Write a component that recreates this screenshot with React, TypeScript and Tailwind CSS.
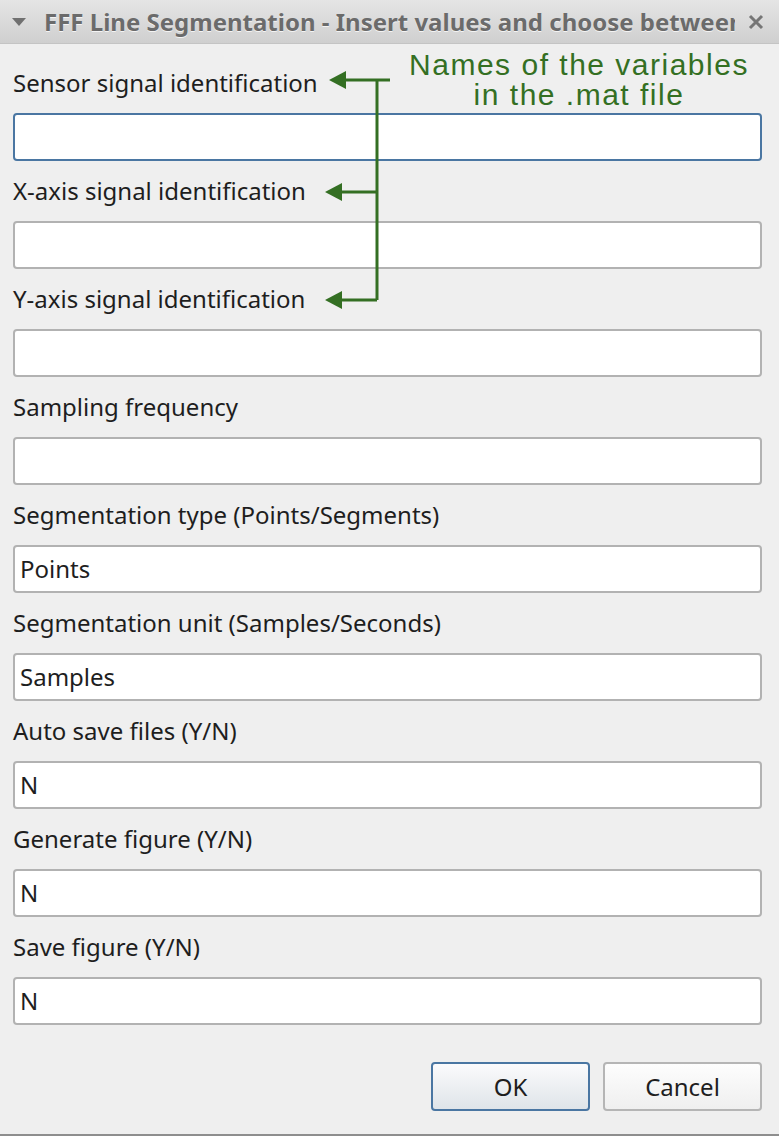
import React from "react";

const fields: { label: string; value: string; focused?: boolean }[] = [
  { label: "Sensor signal identification", value: "", focused: true },
  { label: "X-axis signal identification", value: "" },
  { label: "Y-axis signal identification", value: "" },
  { label: "Sampling frequency", value: "" },
  { label: "Segmentation type (Points/Segments)", value: "Points" },
  { label: "Segmentation unit (Samples/Seconds)", value: "Samples" },
  { label: "Auto save files (Y/N)", value: "N" },
  { label: "Generate figure (Y/N)", value: "N" },
  { label: "Save figure (Y/N)", value: "N" },
];

const App: React.FC = () => {
  return (
    <div className="relative w-[779px] h-[1136px] bg-[#efefef] flex flex-col overflow-hidden font-['Noto_Sans',sans-serif] text-[#1e1e1e]">
      {/* Title bar */}
      <div className="h-[44px] shrink-0 flex items-center bg-gradient-to-b from-[#e5e5e5] to-[#cfcfcf] border-b border-[#c4c4c4]">
        <svg className="ml-[12px] w-[14px] h-[8px]" viewBox="0 0 14 8">
          <polygon points="0,0 14,0 7,8" fill="#707070" />
        </svg>
        <div className="ml-[18px] w-[691px] overflow-hidden whitespace-nowrap text-[24px] leading-[32px] font-bold text-[#6b6b6b] [text-shadow:0_1px_0_#f4f4f4]">
          FFF Line Segmentation - Insert values and choose between options
        </div>
        <svg className="ml-[13px] w-[16px] h-[16px]" viewBox="0 0 16 16">
          <path d="M2 2L14 14M14 2L2 14" stroke="#767676" strokeWidth={3} />
        </svg>
      </div>

      {/* Form */}
      <div className="flex flex-col pt-[9px] pl-[13px] pr-[17px]">
        {fields.map((f) => (
          <div key={f.label} className="flex flex-col">
            <div className="h-[60px] flex items-center text-[24px] leading-none">
              {f.label}
            </div>
            <div
              className={
                f.focused
                  ? "h-[48px] bg-white border-2 border-[#4a76a2] rounded-[4px] flex items-center pl-[5px] text-[24px] leading-none"
                  : "h-[48px] bg-white border-2 border-[#b2b2b2] rounded-[4px] flex items-center pl-[5px] text-[24px] leading-none"
              }
            >
              {f.value}
            </div>
          </div>
        ))}

        {/* Buttons */}
        <div className="mt-[37px] flex justify-end gap-[13px]">
          <button className="w-[159px] h-[49px] rounded-[4px] border-2 border-[#4a76a2] bg-gradient-to-b from-[#fbfbfc] to-[#dfe4e9] text-[24px] leading-none">
            OK
          </button>
          <button className="w-[159px] h-[49px] rounded-[4px] border-2 border-[#b5b5b5] bg-gradient-to-b from-[#fdfdfd] to-[#efefef] text-[24px] leading-none">
            Cancel
          </button>
        </div>
      </div>

      <div className="absolute left-0 right-0 bottom-0 h-[2px] bg-[#8e8e8e]" />

      {/* Annotation */}
      <div className="absolute left-[396px] top-[50px] w-[366px] text-center text-[30px] leading-[30px] tracking-[1.5px] text-[#346f23] font-['Liberation_Sans',Arial,sans-serif]">
        Names of the variables
        <br />
        in the .mat file
      </div>
      <svg className="absolute left-0 top-0 pointer-events-none" width={779} height={400}>
        <g stroke="#346f23" strokeWidth={3} fill="none">
          <path d="M344 80H390" />
          <path d="M377 80V300" />
          <path d="M340 192H377" />
          <path d="M340 300H377" />
        </g>
        <g fill="#346f23">
          <polygon points="329,80 346,71 346,89" />
          <polygon points="325,192 342,183 342,201" />
          <polygon points="325,300 342,291 342,309" />
        </g>
      </svg>
    </div>
  );
};

export default App;
